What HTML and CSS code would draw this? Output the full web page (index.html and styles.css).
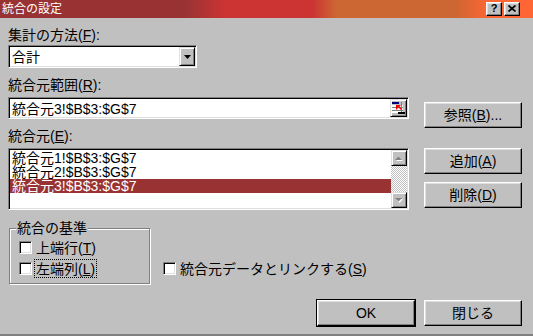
FILE: index.html
```html
<!DOCTYPE html>
<html lang="ja">
<head>
<meta charset="utf-8">
<title>統合の設定</title>
<link rel="stylesheet" href="styles.css">
</head>
<body>
<div class="dialog">
  <div class="titlebar">
    <span class="title">統合の設定</span>
    <div class="caption-btns">
      <span class="cbtn help">?</span>
      <span class="cbtn close"><svg width="8" height="7" viewBox="0 0 8 7"><path d="M0.5 0.5 L7.5 6.5 M7.5 0.5 L0.5 6.5" stroke="#000" stroke-width="1.7" fill="none"/></svg></span>
    </div>
  </div>
  <div class="main">
    <div class="top">
      <div class="left">
        <div class="lbl">集計の方法(<u>F</u>):</div>
        <div class="combo sunken">
          <span class="combo-text">合計</span>
          <span class="btn3d combo-btn"><svg width="7" height="4" viewBox="0 0 7 4"><polygon points="0,0 7,0 3.5,4" fill="#000"/></svg></span>
        </div>
        <div class="lbl gap8">統合元範囲(<u>R</u>):</div>
        <div class="edit sunken">
          <span class="edit-text">統合元3!$B$3:$G$7</span>
          <span class="btn3d ref-btn">
            <svg width="13" height="13" viewBox="0 0 13 13">
              <rect x="0" y="0" width="7" height="2" fill="#000080"/>
              <rect x="0" y="3" width="11" height="8" fill="#fff"/>
              <rect x="0" y="5" width="11" height="1" fill="#808080"/>
              <rect x="0" y="8" width="11" height="1" fill="#808080"/>
              <rect x="9" y="0" width="1" height="11" fill="#808080"/>
              <path d="M4 3 L9 3 L7.5 4.5 L10 7 L9 8 L6.5 5.5 L4 8 Z" fill="#ff0000"/>
              <rect x="6" y="10" width="7" height="2" fill="#000"/>
            </svg>
          </span>
        </div>
        <div class="lbl gap8">統合元(<u>E</u>):</div>
        <div class="list sunken">
          <div class="items">
            <div class="item">統合元1!$B$3:$G$7</div>
            <div class="item">統合元2!$B$3:$G$7</div>
            <div class="item selected">統合元3!$B$3:$G$7</div>
          </div>
          <div class="scrollbar">
            <span class="btn3d sb-btn"><svg width="8" height="5" viewBox="0 0 8 5"><polygon points="1,5 8,5 4.5,1.5" fill="#fff"/><polygon points="0,4 7,4 3.5,0.5" fill="#808080"/></svg></span>
            <span class="sb-track"></span>
            <span class="btn3d sb-btn"><svg width="8" height="5" viewBox="0 0 8 5"><polygon points="1,1 8,1 4.5,5" fill="#fff"/><polygon points="0,0 7,0 3.5,3.5" fill="#808080"/></svg></span>
          </div>
        </div>
      </div>
      <div class="right">
        <button type="button" class="btn btn-ref">参照(<u>B</u>)...</button>
        <button type="button" class="btn btn-add">追加(<u>A</u>)</button>
        <button type="button" class="btn btn-del">削除(<u>D</u>)</button>
      </div>
    </div>
    <div class="bottom">
      <fieldset class="group">
        <legend>統合の基準</legend>
        <div class="check row1"><span class="cb"></span><span class="cb-label">上端行(<u>T</u>)</span></div>
        <div class="check row2"><span class="cb"></span><span class="cb-label focus">左端列(<u>L</u>)</span></div>
      </fieldset>
      <div class="check link"><span class="cb"></span><span class="cb-label">統合元データとリンクする(<u>S</u>)</span></div>
    </div>
    <div class="actions">
      <button type="button" class="btn default">OK</button>
      <button type="button" class="btn">閉じる</button>
    </div>
  </div>
</div>
</body>
</html>
```

FILE: styles.css
```css
* { box-sizing: border-box; }
html, body { margin: 0; padding: 0; }
body {
  width: 533px;
  height: 336px;
  overflow: hidden;
  background: #c0c0c0;
  font-family: "Liberation Sans", "Noto Sans CJK JP", sans-serif;
  font-size: 14px;
  color: #000;
}
u { text-decoration: underline; text-underline-offset: 1px; }

.dialog {
  height: 336px;
  display: flex;
  flex-direction: column;
  box-shadow: inset 0 -2px #808080;
}

.titlebar {
  flex: none;
  height: 18px;
  display: flex;
  align-items: center;
  justify-content: space-between;
  padding: 0 13px 1px 2px;
  color: #fff;
  background: linear-gradient(to right, #993333 0, #993333 185px, #cc3333 225px, #cc3333 312px, #cc6633 336px, #cc6633 455px, #ff6633 490px, #ff6633 100%);
}
.title { font-size: 12px; line-height: 17px; height: 16px; }
.caption-btns { display: flex; gap: 2px; }
.cbtn {
  width: 16px;
  height: 14px;
  display: flex;
  align-items: center;
  justify-content: center;
  background: #c0c0c0;
  border: 1px solid;
  border-color: #fff #000 #000 #fff;
  box-shadow: inset -1px -1px #808080, inset 1px 1px #dfdfdf;
  color: #000;
  font: bold 11px/1 "Liberation Sans", sans-serif;
}

.main {
  flex: 1;
  padding: 8px 11px 0 8px;
  display: flex;
  flex-direction: column;
}
.top { display: flex; gap: 15px; }
.left { width: 401px; flex: none; display: flex; flex-direction: column; }
.right { width: 98px; flex: none; display: flex; flex-direction: column; padding-top: 76px; }

.lbl { height: 16px; line-height: 18px; white-space: nowrap; }
.gap8 { margin-top: 8px; }

.sunken {
  background: #fff;
  border: 1px solid;
  border-color: #808080 #fff #fff #808080;
  box-shadow: inset 1px 1px #000, inset -1px -1px #dfdfdf;
  padding: 1px;
}
.btn3d {
  flex: none;
  display: flex;
  align-items: center;
  justify-content: center;
  background: #c0c0c0;
  border: 1px solid;
  border-color: #dfdfdf #000 #000 #dfdfdf;
  box-shadow: inset 1px 1px #fff, inset -1px -1px #808080;
}

.combo { margin-top: 3px; width: 189px; height: 23px; display: flex; }
.combo-text { flex: 1; height: 19px; line-height: 21px; padding-left: 2px; }
.combo-btn { width: 16px; height: 19px; }

.edit { margin-top: 5px; height: 22px; display: flex; }
.edit-text { flex: 1; height: 18px; line-height: 20px; padding-left: 2px; white-space: nowrap; }
.ref-btn { width: 17px; height: 18px; }

.list { margin-top: 5px; height: 62px; display: flex; }
.items { flex: 1; padding-top: 1px; }
.item { height: 14px; line-height: 15px; padding-left: 2px; white-space: nowrap; }
.item.selected { background: #993333; color: #fff; }
.scrollbar { width: 16px; display: flex; flex-direction: column; }
.sb-btn { width: 16px; height: 16px; }
.sb-track {
  flex: 1;
  background: repeating-conic-gradient(#c0c0c0 0 25%, #fff 0 50%) 0 0 / 2px 2px;
}

.btn {
  width: 98px;
  height: 26px;
  margin: 0;
  padding: 0;
  font: inherit;
  line-height: 24px;
  color: #000;
  text-align: center;
  background: #c0c0c0;
  border: 1px solid;
  border-color: #fff #000 #000 #fff;
  box-shadow: inset -1px -1px #808080, inset 1px 1px #dfdfdf;
}
.btn-add { margin-top: 20px; }
.btn-del { margin-top: 8px; }
.btn.default { box-shadow: 0 0 0 1px #000, inset -1px -1px #808080, inset 1px 1px #dfdfdf; }

.bottom { display: flex; align-items: flex-end; margin-top: 10px; }
.group {
  margin: 0 0 0 1px;
  padding: 0 0 5px 6px;
  width: 141px;
  min-inline-size: 0;
  border: 1px solid #808080;
  box-shadow: 1px 1px 0 #fff, inset 1px 1px 0 #fff;
}
.group legend { padding: 0 1px; line-height: 16px; background: #c0c0c0; }

.check { display: flex; align-items: center; height: 19px; }
.group .check { padding-left: 3px; }
.row1 { margin-top: 2px; }
.row2 { margin-top: 2px; }
.cb {
  flex: none;
  width: 13px;
  height: 13px;
  background: #fff;
  border: 1px solid;
  border-color: #808080 #fff #fff #808080;
  box-shadow: inset 1px 1px #000, inset -1px -1px #dfdfdf;
}
.cb-label { margin-left: 2px; padding: 0 2px; height: 19px; line-height: 21px; white-space: nowrap; }
.focus { outline: 1px dotted #000; outline-offset: -1px; }
.link { margin: 0 0 6px 13px; }

.actions { display: flex; justify-content: flex-end; gap: 9px; margin-top: 16px; }
```
